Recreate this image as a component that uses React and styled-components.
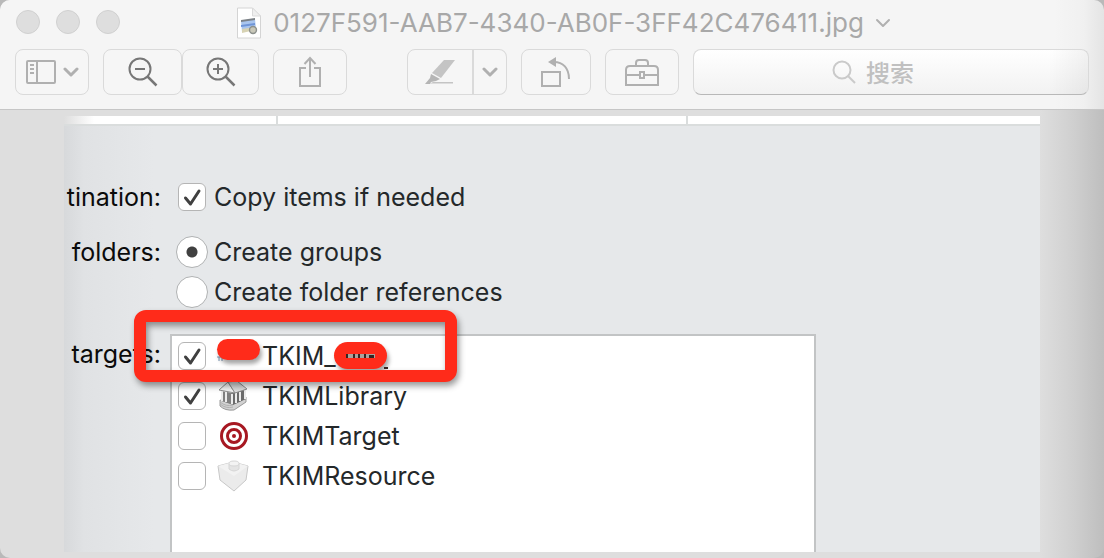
import React from "react";
import styled, { createGlobalStyle } from "styled-components";

const GlobalStyle = createGlobalStyle`
  * { box-sizing: border-box; }
  body {
    margin: 0;
    background: #b9b9b9;
    font-family: Inter, "Noto Sans CJK SC", sans-serif;
  }
`;

const Window = styled.div`
  display: flex;
  flex-direction: column;
  min-height: 100vh;
  overflow: hidden;
  border-radius: 10px;
  background: linear-gradient(to left, #bebebe, #cfcfcf 30px, #dedede 64px);
`;

const Header = styled.header`
  background: linear-gradient(to left, #e4e4e4, #f0f0f0 20px, #f5f5f5 50px);
  border-bottom: 1px solid #c6c6c6;
  height: 110px;
`;

const TitleBar = styled.div`
  position: relative;
  display: flex;
  align-items: center;
  justify-content: center;
  height: 45px;
  padding-left: 24px;
`;

const Lights = styled.div`
  position: absolute;
  left: 16px;
  top: 10px;
  display: flex;
  gap: 16px;
`;

const Light = styled.button`
  width: 24px;
  height: 24px;
  padding: 0;
  border: 1px solid #d0d0d0;
  border-radius: 50%;
  background: #dedede;
`;

const Title = styled.h1`
  margin: 0 11px 0 12px;
  font-size: 26px;
  line-height: 32px;
  font-weight: 400;
  color: #a8a8a8;
  white-space: nowrap;
`;

const Toolbar = styled.div`
  display: flex;
  gap: 14px;
  padding: 4px 15px 0;
`;

const Group = styled.div`
  display: flex;
  margin-right: ${(p) => p.$after || 0}px;
`;

const ToolButton = styled.button`
  display: flex;
  align-items: center;
  justify-content: center;
  gap: 7px;
  width: ${(p) => p.$width}px;
  height: 46px;
  padding: 0;
  color: #b0b0b0;
  background: #f6f6f6;
  border: 1px solid #dadada;
  border-radius: ${(p) =>
    p.$side === "left" ? "8px 0 0 8px" : p.$side === "right" ? "0 8px 8px 0" : "8px"};
  ${(p) => p.$side === "right" && "border-left-width: 2px; margin-left: -1px;"}
`;

const Search = styled.label`
  flex: 1;
  display: flex;
  align-items: center;
  justify-content: center;
  gap: 10px;
  height: 46px;
  padding-right: 32px;
  border: 1px solid #dadada;
  border-bottom-color: #b8b8b8;
  border-radius: 8px;
  background:
    linear-gradient(to left, rgba(0, 0, 0, 0.05), transparent 40px),
    linear-gradient(#ffffff, #f2f2f2);
`;

const SearchInput = styled.input`
  width: 52px;
  padding: 0;
  border: 0;
  outline: 0;
  background: none;
  font: 500 24px/32px "Noto Sans CJK SC", sans-serif;
  color: #c0c0c0;
  &::placeholder { color: #c0c0c0; opacity: 1; }
`;

const Canvas = styled.main`
  flex: 1;
  display: flex;
  padding: 6px 64px;
`;

const Document = styled.section`
  flex: 1;
  display: flex;
  flex-direction: column;
  background: linear-gradient(to right, #d7d9db, #e0e2e4 20px, #e6e8ea 90px);
`;

const Strip = styled.div`
  display: grid;
  grid-template-columns: 213fr 410fr 353fr;
  gap: 2px;
  height: 10px;
  border-bottom: 2px solid #dadddd;
  background: #dadddd;
`;

const StripCell = styled.div`
  background: ${(p) => (p.$fade ? "linear-gradient(to right, #dedede, #fff 30px)" : "#fff")};
`;

const Form = styled.form`
  flex: 1;
  display: flex;
  flex-direction: column;
  padding: 51px 224px 0 0;
`;

const Field = styled.div`
  display: flex;
  margin-bottom: ${(p) => p.$after || 0}px;
  flex: ${(p) => (p.$fill ? 1 : "none")};
`;

const FieldLabel = styled.div`
  width: 97px;
  flex: none;
  margin-right: ${(p) => p.$gap || 16}px;
  text-align: right;
  font-size: 25px;
  font-weight: 430;
  line-height: 40px;
  color: #0b0b0b;
`;

const Option = styled.label`
  display: flex;
  align-items: center;
  height: 40px;
  font-size: 25px;
  font-weight: 430;
  line-height: 40px;
  color: #24282a;
  white-space: nowrap;
`;

const Check = styled.input.attrs({ type: "checkbox" })`
  appearance: none;
  width: 28px;
  height: 28px;
  margin: 0 8px 0 1px;
  border: 1px solid #b5b5b5;
  border-radius: 6px;
  background: #fff;
  &:checked {
    background: #fff
      url("data:image/svg+xml,%3Csvg xmlns='http://www.w3.org/2000/svg' viewBox='0 0 26 26'%3E%3Cpath d='M6.5 14l5 6L20 7' fill='none' stroke='%23404040' stroke-width='3' stroke-linecap='round' stroke-linejoin='round'/%3E%3C/svg%3E");
  }
`;

const Radio = styled.input.attrs({ type: "radio" })`
  appearance: none;
  width: 32px;
  height: 32px;
  margin: 0 6px 0 -1px;
  border: 1px solid #b0b2b3;
  border-radius: 50%;
  background: #fff;
  &:checked { background: radial-gradient(circle, #404040 5px, #fff 6px); }
`;

const Targets = styled.div`
  position: relative;
  flex: 1;
  padding-left: 5px;
  border: 2px solid #c2c4c5;
  border-bottom: 0;
  background: #fff;
`;

const TargetIcon = styled.span`
  display: flex;
  width: 32px;
  margin: 0 13px 0 3px;
`;

const Frame = styled.div`
  position: absolute;
  left: -38px;
  top: -26px;
  width: 323px;
  height: 72px;
  border: 12px solid #ff2b1a;
  border-radius: 12px;
  filter: drop-shadow(2px 4px 3px rgba(0, 0, 0, 0.4));
  pointer-events: none;
`;

const Blot = styled.div`
  position: absolute;
  left: ${(p) => p.$left}px;
  top: ${(p) => p.$top}px;
  width: ${(p) => p.$width}px;
  height: ${(p) => p.$height}px;
  border-radius: 14px;
  background: #ff2b1a;
  box-shadow: 2px 4px 4px rgba(0, 0, 0, 0.35);
`;

const Chevron = ({ width = 16, stroke = 3 }) => (
  <svg width={width} height="12" viewBox="0 0 16 12" fill="none" stroke="#b0b0b0" strokeWidth={stroke} strokeLinecap="round" strokeLinejoin="round">
    <path d="M2 3l6 6 6-6" />
  </svg>
);

const FileIcon = () => (
  <svg width="24" height="32" viewBox="0 0 24 32">
    <path d="M.5 1h15l8 8v22H.5z" fill="#fff" stroke="#d4d4d4" />
    <path d="M15.500 1v8h8z" fill="#efefef" stroke="#dadada" />
    <path d="M4 14l14-2 1 10-14 3z" fill="#a9c5ee" />
    <path d="M4 13l14-2v2L4 15z" fill="#7a8086" />
    <path d="M4 18l14-2v2L4 20z" fill="#6f95d8" />
    <path d="M5 22l13-2v3L5 26z" fill="#d8d3b4" />
    <circle cx="16" cy="23" r="3.500" fill="#c9c8b9" stroke="#8d918d" strokeWidth="1.400" />
  </svg>
);

const SidebarIcon = () => (
  <svg width="30" height="24" viewBox="0 0 30 24" fill="none" stroke="currentColor" strokeWidth="2">
    <rect x="1" y="1" width="28" height="22" rx="1" />
    <path d="M11 1v22M4 5h4M4 9h4M4 13h4" />
  </svg>
);

const ZoomIcon = ({ plus }) => (
  <svg width="30" height="30" viewBox="0 0 30 30" fill="none" stroke="#777" strokeWidth="2">
    <circle cx="12" cy="12" r="10.500" />
    <path d="M7 12h10" />
    {plus && <path d="M12 7v10" />}
    <path d="M19.500 19.500l9 9" strokeWidth="2.500" />
  </svg>
);

const ShareIcon = () => (
  <svg width="22" height="32" viewBox="0 0 22 32" fill="none" stroke="currentColor" strokeWidth="2">
    <path d="M7 12H1v18h20V12h-6M11 21V3M5.500 8L11 2l5.500 6" />
  </svg>
);

const MarkerIcon = () => (
  <svg width="32" height="26" viewBox="0 0 32 26" fill="#c4c4c4">
    <path d="M20 1h11L17 19l-9-5z" />
    <path d="M7 15l9 5-4 2-5 1-1 2H1l5-6z" fill="#b5b5b5" />
    <path d="M9 23h20v1.500H6z" />
  </svg>
);

const RotateIcon = () => (
  <svg width="30" height="32" viewBox="0 0 30 32" fill="none" stroke="currentColor" strokeWidth="2">
    <rect x="1" y="16" width="18" height="14" />
    <path d="M13 6c9 0 15 6 15 17" />
    <path d="M7 6l8-5v10z" fill="currentColor" stroke="none" />
  </svg>
);

const ToolboxIcon = () => (
  <svg width="36" height="28" viewBox="0 0 36 28" fill="none" stroke="currentColor" strokeWidth="2">
    <path d="M2 27V12q0-4 4-4h24q4 0 4 4v15zM2 17h13M20 17h14" />
    <path d="M12 8V5q0-3 3-3h6q3 0 3 3v3" />
    <rect x="16" y="14" width="4" height="6" />
  </svg>
);

const SearchIcon = () => (
  <svg width="24" height="24" viewBox="0 0 24 24" fill="none" stroke="#cacaca" strokeWidth="2">
    <circle cx="10" cy="10" r="8.500" />
    <path d="M16 16l7 7" />
  </svg>
);

const AppIcon = () => (
  <svg width="32" height="32" viewBox="0 0 32 32" fill="none" stroke="#7896b5" strokeWidth="1">
    <path d="M0 17h7M2 17v4M5 18v3" />
  </svg>
);

const LibraryIcon = () => (
  <svg width="32" height="32" viewBox="0 0 32 32" strokeLinejoin="round">
    <path d="M3 20v6q5 5 14 4l12-8v-5l-13 7z" fill="#d2d2d2" stroke="#9a9a9a" />
    <path d="M4 11l12 2v12L5 21z" fill="#808080" />
    <path d="M16 13l13-4v10l-13 6z" fill="#6b6b6b" />
    <path d="M5 11v10M9 12v10M15 14v10M19 13v10M23 12v9M28 10v9" stroke="#ececec" strokeWidth="2" />
    <path d="M2 10l9-8 7 11z" fill="#f3f3f3" stroke="#8f8f8f" />
    <path d="M11 2l9-1 10 8-12 4z" fill="#dcdcdc" stroke="#8f8f8f" />
    <path d="M3 22q6 5 13 3M3 24q6 5 13 3" fill="none" stroke="#b0b0b0" />
  </svg>
);

const TargetBoardIcon = () => (
  <svg width="32" height="32" viewBox="0 0 32 32" fill="#fff" stroke="#a71822" strokeWidth="3">
    <circle cx="17" cy="16" r="12.500" />
    <circle cx="17" cy="16" r="6.500" />
    <circle cx="17" cy="16" r="2" fill="#a71822" stroke="none" />
  </svg>
);

const BrickIcon = () => (
  <svg width="32" height="32" viewBox="0 0 32 32" stroke="#c8c8c8" strokeLinejoin="round">
    <path d="M1 6l15-4 15 4-2 14-12 11L3 20z" fill="#ebebeb" />
    <path d="M1 6l16 10L31 6 16 2z" fill="#f2f2f2" stroke="none" />
    <path d="M12 4v5q5 4 10 0V4" fill="#e4e4e4" stroke="#d6d6d6" />
    <ellipse cx="17" cy="3.500" rx="5" ry="2.500" fill="#f3f3f3" stroke="#d6d6d6" />
  </svg>
);

const HiddenGlyphs = () => (
  <svg width="54" height="28" viewBox="0 0 54 28" fill="#342421">
    <path d="M12 12h29v4H12z" fill="#aaa39e" />
    <path d="M12 12h2v4h-2zM19 12h2v4h-2zM24 12h2v4h-2zM30 12h2v4h-2zM35 13h5v3h-5zM50 25h4v2h-4z" />
  </svg>
);

const targets = [
  { name: "TKIM_", icon: AppIcon, checked: true },
  { name: "TKIMLibrary", icon: LibraryIcon, checked: true },
  { name: "TKIMTarget", icon: TargetBoardIcon, checked: false },
  { name: "TKIMResource", icon: BrickIcon, checked: false },
];

export default function App() {
  return (
    <Window>
      <GlobalStyle />
      <Header>
        <TitleBar>
          <Lights>
            <Light aria-label="Close" />
            <Light aria-label="Minimize" />
            <Light aria-label="Zoom window" />
          </Lights>
          <FileIcon />
          <Title>0127F591-AAB7-4340-AB0F-3FF42C476411.jpg</Title>
          <Chevron stroke={2} />
        </TitleBar>
        <Toolbar>
          <ToolButton $width={74} aria-label="Sidebar"><SidebarIcon /><Chevron /></ToolButton>
          <Group>
            <ToolButton $width={79} aria-label="Zoom out"><ZoomIcon /></ToolButton>
            <ToolButton $width={77} aria-label="Zoom in"><ZoomIcon plus /></ToolButton>
          </Group>
          <Group $after={46}>
            <ToolButton $width={74} aria-label="Share"><ShareIcon /></ToolButton>
          </Group>
          <Group>
            <ToolButton $width={66} $side="left" aria-label="Highlight"><MarkerIcon /></ToolButton>
            <ToolButton $width={35} $side="right" aria-label="Highlight colours"><Chevron /></ToolButton>
          </Group>
          <ToolButton $width={70} aria-label="Rotate"><RotateIcon /></ToolButton>
          <ToolButton $width={74} aria-label="Markup toolbox"><ToolboxIcon /></ToolButton>
          <Search>
            <SearchIcon />
            <SearchInput placeholder="搜索" aria-label="搜索" />
          </Search>
        </Toolbar>
      </Header>
      <Canvas>
        <Document>
          <Strip><StripCell $fade /><StripCell /><StripCell /></Strip>
          <Form>
            <Field $after={15}>
              <FieldLabel>tination:</FieldLabel>
              <Option><Check defaultChecked />Copy items if needed</Option>
            </Field>
            <Field $after={22}>
              <FieldLabel>folders:</FieldLabel>
              <div>
                <Option><Radio name="folders" defaultChecked />Create groups</Option>
                <Option><Radio name="folders" />Create folder references</Option>
              </div>
            </Field>
            <Field $fill>
              <FieldLabel $gap={9}>targets:</FieldLabel>
              <Targets>
                {targets.map(({ name, icon: Icon, checked }) => (
                  <Option key={name}>
                    <Check defaultChecked={checked} />
                    <TargetIcon><Icon /></TargetIcon>
                    {name}
                  </Option>
                ))}
                <Blot $left={45} $top={3} $width={43} $height={21} />
                <Blot $left={162} $top={6} $width={53} $height={27}><HiddenGlyphs /></Blot>
                <Frame />
              </Targets>
            </Field>
          </Form>
        </Document>
      </Canvas>
    </Window>
  );
}
